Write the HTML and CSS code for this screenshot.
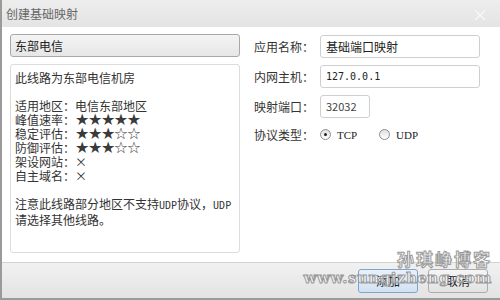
FILE: index.html
```html
<html>
<head>
  <meta charset="utf-8">
  <link rel="stylesheet" href="styles.css">
</head>
<body>
  <div class="dialog">
    <div class="titlebar">
      <span class="title">创建基础映射</span>
      <span class="close">×</span>
    </div>

    <div class="content">
      <div class="left">
        <div class="select">东部电信</div>
        <div class="info">
          <div>此线路为东部电信机房</div>
          <div>&nbsp;</div>
          <div>适用地区：电信东部地区</div>
          <div>峰值速率：<span class="stars">★★★★★</span></div>
          <div>稳定评估：<span class="stars">★★★☆☆</span></div>
          <div>防御评估：<span class="stars">★★★☆☆</span></div>
          <div>架设网站：×</div>
          <div>自主域名：×</div>
          <div>&nbsp;</div>
          <div class="nowrap">注意此线路部分地区不支持<span class="lat">UDP</span>协议，<span class="lat">UDP</span></div>
          <div>请选择其他线路。</div>
        </div>
      </div>

      <div class="form">
        <div class="row">
          <label>应用名称：</label>
          <div class="input wide">基础端口映射</div>
        </div>
        <div class="row">
          <label>内网主机：</label>
          <div class="input wide mono">127.0.0.1</div>
        </div>
        <div class="row">
          <label>映射端口：</label>
          <div class="input short">32032</div>
        </div>
        <div class="row radios">
          <label>协议类型：</label>
          <span class="radio checked"></span><span class="opt">TCP</span>
          <span class="radio"></span><span class="opt">UDP</span>
        </div>
      </div>
    </div>

    <div class="footer">
      <button class="btn primary">添加</button>
      <button class="btn">取消</button>
    </div>

    <div class="watermark">
      <div class="wm-name">孙琪峥博客</div>
      <div class="wm-url">www.sunqizheng.com</div>
    </div>
  </div>
</body>
</html>
```

FILE: styles.css
```css
body {
  margin: 0;
  font: 12px/14px "Noto Sans CJK SC", "DejaVu Sans", sans-serif;
  color: #333;
  background: #fff;
}
.dialog {
  position: relative;
  width: 498px;
  height: 298px;
  border-left: 2px solid #9a9a9a;
  border-bottom: 2px solid #9a9a9a;
  display: flex;
  flex-direction: column;
  overflow: hidden;
}
.titlebar {
  height: 27px;
  background: linear-gradient(#ededed, #e4e4e4);
  display: flex;
  align-items: center;
  justify-content: space-between;
  padding: 0 12px 0 4px;
}
.title {
  color: #666;
  font-size: 12px;
}
.close {
  color: #fafafa;
  font-size: 16px;
}
.content {
  height: 235px;
  display: flex;
  padding: 7px 0 0 8px;
  box-sizing: border-box;
}
.left {
  width: 230px;
  display: flex;
  flex-direction: column;
  gap: 7px;
}
.select {
  height: 23px;
  box-sizing: border-box;
  border: 1px solid #a8a8a8;
  border-radius: 3px;
  background: linear-gradient(#f4f4f4, #e6e6e6);
  padding: 0 4px;
  line-height: 21px;
  font-size: 12px;
  color: #222;
}
.info {
  height: 189px;
  box-sizing: border-box;
  border: 1px solid #dcdcdc;
  border-radius: 3px;
  padding: 6px 4px;
  color: #333;
}
.nowrap {
  white-space: nowrap;
}
.lat {
  font-family: "DejaVu Sans Mono", monospace;
  font-size: 10px;
}
.stars {
  font-family: "DejaVu Sans", sans-serif;
  font-size: 16px;
  line-height: 14px;
  letter-spacing: -1.4px;
  color: #3a3a3a;
}
.form {
  padding: 1px 0 0 14px;
  display: flex;
  flex-direction: column;
  gap: 7px;
}
.row {
  display: flex;
  align-items: center;
  height: 23px;
}
.row label {
  width: 66px;
}
.input {
  height: 23px;
  box-sizing: border-box;
  border: 1px solid #cfcfcf;
  border-radius: 3px;
  padding: 0 5px;
  line-height: 21px;
  color: #222;
}
.wide {
  width: 160px;
}
.short {
  width: 50px;
  font-size: 11px;
  color: #444;
}
.mono {
  font-family: "DejaVu Sans Mono", monospace;
  font-size: 10px;
}
.radios {
  margin-top: -2px;
}
.radio {
  width: 11px;
  height: 11px;
  box-sizing: border-box;
  border: 1px solid #8d8d8d;
  border-radius: 50%;
  background: linear-gradient(#e0e0e0, #fff);
  margin-right: 6px;
  display: flex;
  align-items: center;
  justify-content: center;
}
.radio.checked::after {
  content: "";
  width: 3px;
  height: 3px;
  border-radius: 50%;
  background: #222;
}
.opt {
  font-family: "Liberation Serif", serif;
  font-size: 11px;
  color: #222;
  width: 42px;
}
.footer {
  flex: 1;
  border-top: 1px solid #d2d2d2;
  background: linear-gradient(#f1f1f1, #e3e3e3);
  display: flex;
  justify-content: flex-end;
  align-items: center;
  gap: 10px;
  padding: 0 12px 0 0;
}
.btn {
  width: 60px;
  height: 24px;
  border: 1px solid #acacac;
  border-radius: 3px;
  background: linear-gradient(#f5f5f5, #e2e2e2);
  font: 12px "Noto Sans CJK SC", sans-serif;
  color: #222;
  padding: 0;
}
.btn.primary {
  border-color: #7ea3cd;
  background: linear-gradient(#e9f1fa, #d2e2f3);
}
.watermark {
  position: absolute;
  right: 8px;
  bottom: 12px;
  text-align: right;
  color: rgba(255, 255, 255, 0.6);
  -webkit-text-stroke: 1px #9a9a9a;
  font-family: "DejaVu Serif", serif;
  font-weight: bold;
}
.wm-name {
  font-family: "Noto Sans CJK SC", sans-serif;
  font-size: 17px;
  line-height: 22px;
  letter-spacing: 2px;
}
.wm-url {
  font-size: 15px;
  line-height: 16px;
  letter-spacing: 0.5px;
}
```
